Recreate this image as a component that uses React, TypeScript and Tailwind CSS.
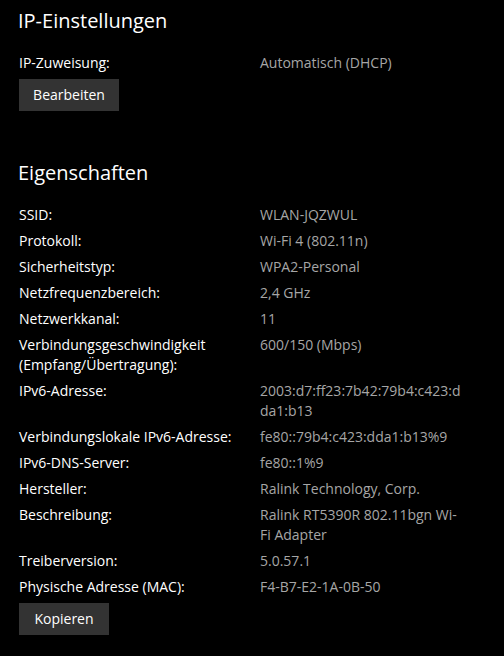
const rows: [string, string][] = [
  ["SSID:", "WLAN-JQZWUL"],
  ["Protokoll:", "Wi-Fi 4 (802.11n)"],
  ["Sicherheitstyp:", "WPA2-Personal"],
  ["Netzfrequenzbereich:", "2,4 GHz"],
  ["Netzwerkkanal:", "11"],
  ["Verbindungsgeschwindigkeit (Empfang/Übertragung):", "600/150 (Mbps)"],
  ["IPv6-Adresse:", "2003:d7:ff23:7b42:79b4:c423:dda1:b13"],
  ["Verbindungslokale IPv6-Adresse:", "fe80::79b4:c423:dda1:b13%9"],
  ["IPv6-DNS-Server:", "fe80::1%9"],
  ["Hersteller:", "Ralink Technology, Corp."],
  ["Beschreibung:", "Ralink RT5390R 802.11bgn Wi-Fi Adapter"],
  ["Treiberversion:", "5.0.57.1"],
  ["Physische Adresse (MAC):", "F4-B7-E2-1A-0B-50"],
];

function Row({ label, value }: { label: string; value: string }) {
  return (
    <div className="flex text-[14px] leading-[20px]">
      <div className="w-[241px] shrink-0 pr-2 text-white">{label}</div>
      <div className="w-[204px] text-[#a6a6a6] [overflow-wrap:anywhere]">{value}</div>
    </div>
  );
}

function Button({ children, width }: { children: string; width: string }) {
  return (
    <button className={`${width} h-[32px] bg-[#333333] text-white text-[14px] leading-[20px]`}>
      {children}
    </button>
  );
}

export default function App() {
  return (
    <div
      className="min-h-[656px] w-[504px] bg-black pl-[19px] pt-[7px]"
      style={{ fontFamily: '"Segoe UI", "Open Sans", "Noto Sans", sans-serif' }}
    >
      <h2 className="-ml-px text-[20px] leading-[28px] text-white">IP-Einstellungen</h2>

      <div className="mt-[18px] flex flex-col gap-[6px]">
        <Row label="IP-Zuweisung:" value="Automatisch (DHCP)" />
      </div>
      <div className="mt-[6px]">
        <Button width="w-[100px]">Bearbeiten</Button>
      </div>

      <h2 className="-ml-px mt-[48px] text-[20px] leading-[28px] text-white">Eigenschaften</h2>

      <div className="mt-[18px] flex flex-col gap-[6px]">
        {rows.map(([l, v]) => (
          <Row key={l} label={l} value={v} />
        ))}
      </div>
      <div className="mt-[6px]">
        <Button width="w-[90px]">Kopieren</Button>
      </div>
    </div>
  );
}
